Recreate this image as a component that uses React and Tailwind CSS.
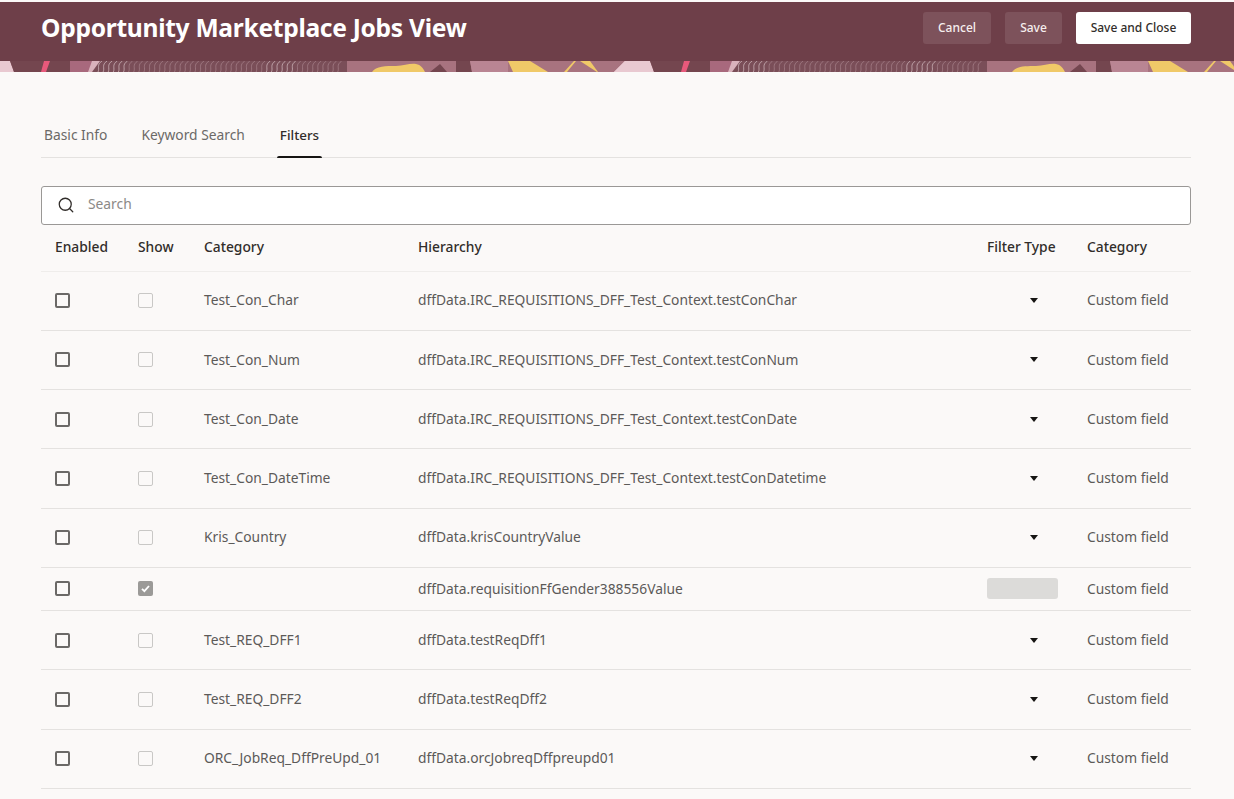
import React from "react";
import { Search } from "lucide-react";

const font = { fontFamily: '"Noto Sans", sans-serif' };

const rows = [
  ["Test_Con_Char", "dffData.IRC_REQUISITIONS_DFF_Test_Context.testConChar"],
  ["Test_Con_Num", "dffData.IRC_REQUISITIONS_DFF_Test_Context.testConNum"],
  ["Test_Con_Date", "dffData.IRC_REQUISITIONS_DFF_Test_Context.testConDate"],
  ["Test_Con_DateTime", "dffData.IRC_REQUISITIONS_DFF_Test_Context.testConDatetime"],
  ["Kris_Country", "dffData.krisCountryValue"],
  ["", "dffData.requisitionFfGender388556Value", true],
  ["Test_REQ_DFF1", "dffData.testReqDff1"],
  ["Test_REQ_DFF2", "dffData.testReqDff2"],
  ["ORC_JobReq_DffPreUpd_01", "dffData.orcJobreqDffpreupd01"],
];

function Strip() {
  const tile = (x) => (
    <g key={x} transform={`translate(${x} 0)`}>
      <rect x="0" y="0" width="640" height="11" fill="#a8737f" />
      <path d="M-26 11L-15 0H10L14 11Z" fill="#e9c9d1" />
      <path d="M10 0H70V11H14Z" fill="#74464f" />
      <path d="M44 0H50L46 11H41Z" fill="#e8597b" />
      <path d="M70 0H100L88 11H70Z" fill="#a8697d" />
      <path d="M92 0H108L98 11H88Z" fill="#d9b2bc" />
      <path d="M100 0H347V11H92Z" fill="#7a4e58" />
      <g fill="none" strokeWidth="0.7">
        {Array.from({ length: 48 }).map((_, i) => (
          <path
            key={i}
            stroke={(i < 6 || (i > 32 && i < 39)) ? "#d9c2c6" : "#a9848c"}
            d={`M${98 + i * 5.1} 11C${100 + i * 5.1} 7 ${96 + i * 5.1} 4 ${102 + i * 5.1} 0`}
          />
        ))}
      </g>
      <path d="M347 0H640V11H347Z" fill="#a8737f" />
      <path d="M372 11C376 5 386 5 396 5C404 5 410 2 416 3C421 4 423 7 425 11Z" fill="#f0c968" />
      <path d="M430 11L440 3L447 11Z" fill="#74464f" />
      <path d="M456 0H470L472 11H456Z" fill="#74464f" />
      <path d="M470 0H508V11H472Z" fill="#b98593" />
      <path d="M508 0H530L548 11H513Z" fill="#f0c968" />
      <path d="M564 11L574 0H576L567 11Z" fill="#f0c968" />
      <path d="M580 0H590L598 11H597Z" fill="#f0c968" />
      <path d="M625 0H640V11H614Z" fill="#e9c9d1" />
    </g>
  );
  return (
    <svg className="block h-[11px] w-full" viewBox="0 0 1234 11" preserveAspectRatio="none">
      {tile(0)}
      {tile(640)}
    </svg>
  );
}

function Box({ muted, checked }) {
  if (checked) {
    return (
      <span className="flex h-[15px] w-[15px] items-center justify-center rounded-[2px] bg-[#9b9a98]">
        <svg width="11" height="11" viewBox="0 0 11 11" fill="none">
          <path d="M2 5.8L4.4 8.2L9 3" stroke="#fff" strokeWidth="1.8" />
        </svg>
      </span>
    );
  }
  return (
    <span
      className={
        muted
          ? "block h-[15px] w-[15px] rounded-[2px] border border-[#c9c8c6] bg-[#fbf9f8]"
          : "block h-[15px] w-[15px] rounded-[2px] border-2 border-[#6b6967] bg-[#fbf9f8]"
      }
    />
  );
}

const grid = "grid grid-cols-[83px_66px_214px_569px_100px_1fr] items-center";

export default function App() {
  return (
    <div className="h-[799px] w-[1234px] overflow-hidden bg-[#fbf9f8] text-[13.8px]" style={font}>
      <div className="bg-[#fbf9f8] pt-[2px]">
        <div className="flex h-[59px] items-center justify-between bg-[#6e3f49] pb-[7px] pl-[41px] pr-[43px]">
          <h1 className="text-[24.6px] font-bold leading-none tracking-[-0.3px] text-white">Opportunity Marketplace Jobs View</h1>
          <div className="flex items-center gap-[14px] text-[12px] font-medium">
            <button className="h-[32px] w-[68px] rounded-[3px] bg-[#7d525b] text-[#f6eeee]">Cancel</button>
            <button className="h-[32px] w-[57px] rounded-[3px] bg-[#7d525b] text-[#f6eeee]">Save</button>
            <button className="h-[32px] w-[115px] rounded-[3px] bg-white text-[#312d2a]">Save and Close</button>
          </div>
        </div>
        <Strip />
      </div>

      <div className="pl-[41px] pr-[43px]">
        <div className="mt-[49px] flex h-[37px] items-start border-b border-[#e4e2e0] pl-[3px] text-[#6b6967]">
          <span className="mr-[34px] leading-[28px]">Basic Info</span>
          <span className="mr-[35px] leading-[28px]">Keyword Search</span>
          <span className="relative text-[13.4px] font-medium leading-[28px] text-[#312d2a]">
            Filters
            <span className="absolute -bottom-[9px] -left-[3px] -right-[3px] h-[2px] rounded-t-[2px] bg-[#161513]" />
          </span>
        </div>

        <div className="mt-[28px] flex h-[39px] items-center rounded-[3px] border border-[#9a9896] bg-white pl-[15px]">
          <Search size={18} strokeWidth={1.7} className="-mt-[1px] text-[#312d2a]" />
          <span className="-mt-[2px] ml-[13px] text-[#8b8987]">Search</span>
        </div>

        <div className={`${grid} h-[46.5px] border-b border-[#efedeb] pb-[1px] pl-[14px] font-medium text-[#312d2a]`}>
          <span>Enabled</span>
          <span>Show</span>
          <span>Category</span>
          <span>Hierarchy</span>
          <span>Filter Type</span>
          <span>Category</span>
        </div>

        {rows.map(([name, path, locked]) => (
          <div
            key={path}
            className={`${grid} ${locked ? "h-[43px]" : "h-[59.3px]"} border-b border-[#e4e2e0] pl-[14px] text-[#5c5a58]`}
          >
            <Box />
            <Box muted checked={locked} />
            <span>{name}</span>
            <span>{path}</span>
            {locked ? (
              <span className="block h-[21px] w-[71px] rounded-[3px] bg-[#dcdbd9]" />
            ) : (
              <span className="flex w-[94px] justify-center">
                <span className="h-0 w-0 border-x-[4.5px] border-t-[5px] border-x-transparent border-t-[#161513]" />
              </span>
            )}
            <span>Custom field</span>
          </div>
        ))}
      </div>
    </div>
  );
}
